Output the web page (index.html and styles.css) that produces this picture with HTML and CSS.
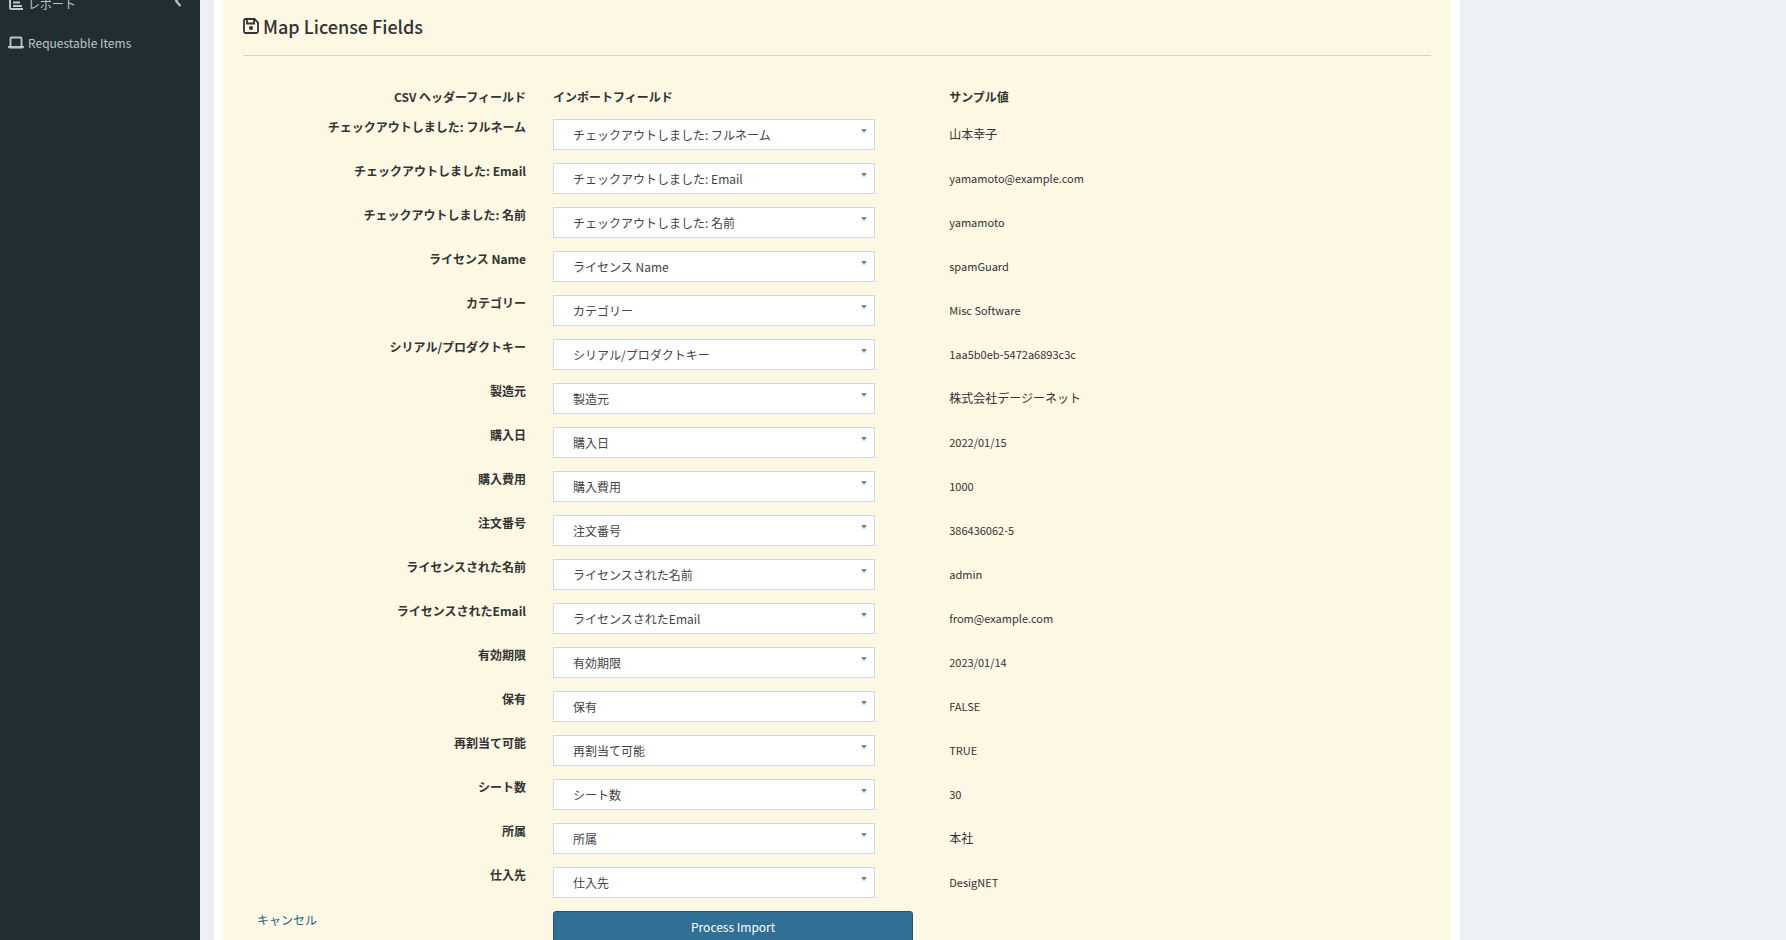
FILE: index.html
```html
<!DOCTYPE html>
<html lang="ja">
<head>
	<meta charset="utf-8">
	<meta name="viewport" content="width=device-width, initial-scale=1">
	<title>Map License Fields</title>
	<link rel="stylesheet" href="styles.css">
</head>
<body>
<div class="wrapper">
	<nav class="sidebar">
		<a class="menu-item" href="#">
			<svg class="icon" viewBox="0 0 16 14"><path d="M2 0v10.500a1.500 1.500 0 0 0 1.500 1.500H15M5 2h5M5 5.500h7M5 9h9" fill="none" stroke="currentColor" stroke-width="2"/></svg>
			<span>レポート</span>
			<svg class="caret" viewBox="0 0 8 12"><path d="M6.500 1L2 6l4.500 5" fill="none" stroke="currentColor" stroke-width="2"/></svg>
		</a>
		<a class="menu-item" href="#">
			<svg class="icon" viewBox="0 0 16 14"><path d="M2.500 10V2.500a1 1 0 0 1 1-1h9a1 1 0 0 1 1 1V10" fill="none" stroke="currentColor" stroke-width="1.800"/><path d="M0 10h16v.8a1.700 1.700 0 0 1-1.700 1.700H1.700A1.700 1.700 0 0 1 0 10.800z" fill="currentColor"/></svg>
			<span>Requestable Items</span>
		</a>
	</nav>
	<main class="content">
		<div class="box">
			<form class="callout">
				<h2 class="title">
					<svg class="icon-save" viewBox="0 0 16 16"><path d="M2.500 1h9L15 4.500v9a1.500 1.500 0 0 1-1.500 1.500h-11A1.500 1.500 0 0 1 1 13.500v-11A1.500 1.500 0 0 1 2.500 1zM4 1v4.500h7V1" fill="none" stroke="currentColor" stroke-width="1.800"/><circle cx="8" cy="10" r="2" fill="currentColor"/></svg>
					Map License Fields
				</h2>
				<div class="row head">
					<div class="name">CSV ヘッダーフィールド</div>
					<div>インポートフィールド</div>
					<div class="sample ja">サンプル値</div>
				</div>
				<div class="row">
					<label class="name" for="f1">チェックアウトしました: フルネーム</label>
					<div class="select"><select id="f1"><option>チェックアウトしました: フルネーム</option></select></div>
					<div class="sample ja">山本幸子</div>
				</div>
				<div class="row">
					<label class="name" for="f2">チェックアウトしました: Email</label>
					<div class="select"><select id="f2"><option>チェックアウトしました: Email</option></select></div>
					<div class="sample">yamamoto@example.com</div>
				</div>
				<div class="row">
					<label class="name" for="f3">チェックアウトしました: 名前</label>
					<div class="select"><select id="f3"><option>チェックアウトしました: 名前</option></select></div>
					<div class="sample">yamamoto</div>
				</div>
				<div class="row">
					<label class="name" for="f4">ライセンス Name</label>
					<div class="select"><select id="f4"><option>ライセンス Name</option></select></div>
					<div class="sample">spamGuard</div>
				</div>
				<div class="row">
					<label class="name" for="f5">カテゴリー</label>
					<div class="select"><select id="f5"><option>カテゴリー</option></select></div>
					<div class="sample">Misc Software</div>
				</div>
				<div class="row">
					<label class="name" for="f6">シリアル/プロダクトキー</label>
					<div class="select"><select id="f6"><option>シリアル/プロダクトキー</option></select></div>
					<div class="sample">1aa5b0eb-5472a6893c3c</div>
				</div>
				<div class="row">
					<label class="name" for="f7">製造元</label>
					<div class="select"><select id="f7"><option>製造元</option></select></div>
					<div class="sample ja">株式会社デージーネット</div>
				</div>
				<div class="row">
					<label class="name" for="f8">購入日</label>
					<div class="select"><select id="f8"><option>購入日</option></select></div>
					<div class="sample">2022/01/15</div>
				</div>
				<div class="row">
					<label class="name" for="f9">購入費用</label>
					<div class="select"><select id="f9"><option>購入費用</option></select></div>
					<div class="sample">1000</div>
				</div>
				<div class="row">
					<label class="name" for="f10">注文番号</label>
					<div class="select"><select id="f10"><option>注文番号</option></select></div>
					<div class="sample">386436062-5</div>
				</div>
				<div class="row">
					<label class="name" for="f11">ライセンスされた名前</label>
					<div class="select"><select id="f11"><option>ライセンスされた名前</option></select></div>
					<div class="sample">admin</div>
				</div>
				<div class="row">
					<label class="name" for="f12">ライセンスされたEmail</label>
					<div class="select"><select id="f12"><option>ライセンスされたEmail</option></select></div>
					<div class="sample">from@example.com</div>
				</div>
				<div class="row">
					<label class="name" for="f13">有効期限</label>
					<div class="select"><select id="f13"><option>有効期限</option></select></div>
					<div class="sample">2023/01/14</div>
				</div>
				<div class="row">
					<label class="name" for="f14">保有</label>
					<div class="select"><select id="f14"><option>保有</option></select></div>
					<div class="sample">FALSE</div>
				</div>
				<div class="row">
					<label class="name" for="f15">再割当て可能</label>
					<div class="select"><select id="f15"><option>再割当て可能</option></select></div>
					<div class="sample">TRUE</div>
				</div>
				<div class="row">
					<label class="name" for="f16">シート数</label>
					<div class="select"><select id="f16"><option>シート数</option></select></div>
					<div class="sample">30</div>
				</div>
				<div class="row">
					<label class="name" for="f17">所属</label>
					<div class="select"><select id="f17"><option>所属</option></select></div>
					<div class="sample ja">本社</div>
				</div>
				<div class="row">
					<label class="name" for="f18">仕入先</label>
					<div class="select"><select id="f18"><option>仕入先</option></select></div>
					<div class="sample">DesigNET</div>
				</div>
				<div class="row actions">
					<a class="cancel" href="#">キャンセル</a>
					<button class="btn" type="submit">Process Import</button>
				</div>
			</form>
		</div>
	</main>
</div>
</body>
</html>
```
FILE: styles.css
```css
* { box-sizing: border-box; }
html { height: 100%; overflow: hidden; }
body { height: 100%; margin: 0; overflow: hidden; background: #ecf0f5; color: #333; font: 12px/16px "Noto Sans CJK JP", sans-serif; }
a { color: #296282; text-decoration: none; }

.wrapper { display: flex; min-height: 100%; }
.sidebar { flex: 0 0 200px; background: #222d32; }
.menu-item { display: flex; align-items: center; gap: 4px; height: 40px; padding: 0 18px 0 8px; color: #b8c7ce; }
.menu-item:first-child { height: 41px; margin-top: -17px; margin-bottom: -1px; }
.icon { width: 16px; height: 14px; }
.caret { width: 8px; height: 12px; margin: 0 0 6px auto; }

.content { flex: 1; padding: 0 14px; }
.box { width: 80%; padding: 0 9px; background: #fff; }
.callout { padding: 14px 20px; background: #fcf8e3; }
.title { display: flex; align-items: center; gap: 4px; height: 42px; margin: 0 0 33px; padding-bottom: 18px; border-bottom: 1px solid #d2d3ce; font-size: 18px; font-weight: 500; line-height: 24px; }
.icon-save { width: 16px; height: 16px; }

.row { display: grid; grid-template-columns: 283fr 360fr 491fr; column-gap: 27px; margin-bottom: 13px; }
.name { text-align: right; font-weight: 700; }
.sample { padding: 7px 0 0 9px; font-size: 11px; }
.sample.ja { font-size: 12px; }
.head { margin-bottom: 14px; font-weight: 700; }
.head .sample { padding-top: 0; }
.select { position: relative; margin-right: 38px; }
.select::after { content: ""; position: absolute; top: 10px; right: 8px; border: solid transparent; border-width: 4px 3px 0; border-top-color: #888; pointer-events: none; }
.select select { display: block; appearance: none; width: 100%; height: 31px; padding: 0 19px; border: 1px solid #d2d6de; border-radius: 0; background: #fff; color: #444; font: inherit; }
.cancel { padding: 1px 14px; }
.btn { height: 32px; border: 1px solid #23536f; border-radius: 3px; background: #307095; color: #fff; font: inherit; }
```
